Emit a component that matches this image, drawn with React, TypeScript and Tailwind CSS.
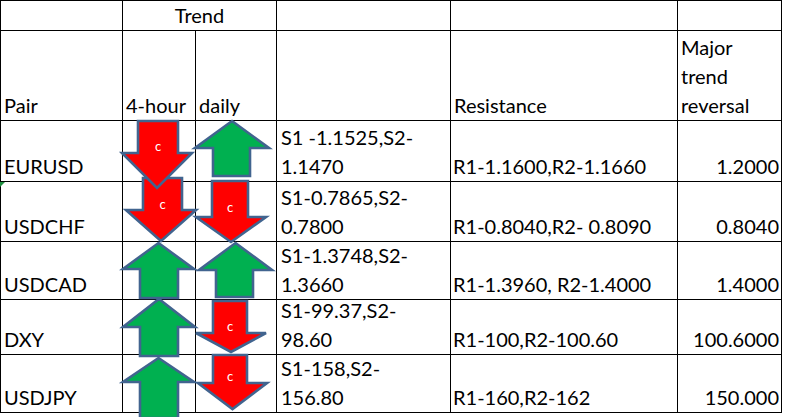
import React from "react";

type Arrow = {
  dir: "up" | "down";
  w: number;
  h: number;
  sl: number; // shaft left
  sr: number; // shaft right
  head: number; // where the head starts
  pos: string; // position classes, written out in full
  cy?: number; // "c" label centre
};

const rows = [
  {
    pair: "EURUSD",
    z: "z-50",
    h4: { dir: "down", w: 72, h: 69, sl: 17, sr: 57, head: 33, pos: "left-[-2px] top-[-1px]", cy: 27 } as Arrow,
    daily: { dir: "up", w: 76, h: 57, sl: 19, sr: 56, head: 28, pos: "left-[-2px] top-[-1px]" } as Arrow,
    s1: "S1 -1.1525,S2-",
    s2: "1.1470",
    res: "R1-1.1600,R2-1.1660",
    major: "1.2000",
  },
  {
    pair: "USDCHF",
    z: "z-40",
    mark: true,
    h4: { dir: "down", w: 72, h: 65, sl: 18, sr: 57, head: 33, pos: "left-[2px] top-[-5px]", cy: 28 } as Arrow,
    daily: { dir: "down", w: 72, h: 63, sl: 17, sr: 53, head: 37, pos: "left-[-1px] top-[-2px]", cy: 28 } as Arrow,
    s1: "S1-0.7865,S2-",
    s2: "0.7800",
    res: "R1-0.8040,R2- 0.8090",
    major: "0.8040",
  },
  {
    pair: "USDCAD",
    z: "z-30",
    h4: { dir: "up", w: 73, h: 57, sl: 18, sr: 56, head: 27, pos: "left-[-1px] top-[0px]" } as Arrow,
    daily: { dir: "up", w: 75, h: 56, sl: 18, sr: 55, head: 28, pos: "left-[2px] top-[0px]" } as Arrow,
    s1: "S1-1.3748,S2-",
    s2: "1.3660",
    res: "R1-1.3960, R2-1.4000",
    major: "1.4000",
  },
  {
    pair: "DXY",
    z: "z-20",
    h4: { dir: "up", w: 74, h: 59, sl: 18, sr: 56, head: 29, pos: "left-[-1px] top-[-2px]" } as Arrow,
    daily: { dir: "down", w: 72, h: 53, sl: 18, sr: 52, head: 33, pos: "left-[-1px] top-[0px]", cy: 27 } as Arrow,
    s1: "S1-99.37,S2-",
    s2: "98.60",
    res: "R1-100,R2-100.60",
    major: "100.6000",
  },
  {
    pair: "USDJPY",
    z: "z-10",
    h4: { dir: "up", w: 73, h: 62, sl: 18, sr: 56, head: 25, pos: "left-[-1px] top-[2px]" } as Arrow,
    daily: { dir: "down", w: 71, h: 56, sl: 16, sr: 50, head: 29, pos: "left-[1px] top-[-1px]", cy: 23 } as Arrow,
    s1: "S1-158,S2-",
    s2: "156.80",
    res: "R1-160,R2-162",
    major: "150.000",
  },
];

function ArrowShape({ a, z }: { a: Arrow; z: string }) {
  const { w, h, sl, sr, head } = a;
  const mid = w / 2;
  const pts =
    a.dir === "down"
      ? [[sl, 1], [sr, 1], [sr, head], [w - 1, head], [mid, h - 1], [1, head], [sl, head]]
      : [[mid, 1], [w - 1, head], [sr, head], [sr, h - 1], [sl, h - 1], [sl, head], [1, head]];
  return (
    <svg width={w} height={h} viewBox={`0 0 ${w} ${h}`} className={`absolute overflow-visible ${z} ${a.pos}`}>
      <polygon
        points={pts.map((p) => p.join(",")).join(" ")}
        fill={a.dir === "down" ? "#ff0000" : "#00b050"}
        stroke="#41648f"
        strokeWidth={2.6}
        strokeLinejoin="miter"
      />
      {a.dir === "down" && (
        <text
          x={(sl + sr) / 2}
          y={(a.cy ?? 27) + 4}
          textAnchor="middle"
          fill="#ffffff"
          fontSize={13}
          fontFamily="Lato, sans-serif"
        >
          c
        </text>
      )}
    </svg>
  );
}

const cell = "border-r border-b border-black flex flex-col justify-end leading-[29px] whitespace-nowrap";

export default function App() {
  return (
    <div className="bg-white min-h-[417px] overflow-hidden font-['Lato',sans-serif] text-[20px] text-black">
      <div className="grid w-fit grid-cols-[122px_73px_81px_174px_227px_104px] grid-rows-[30px_90px_61px_60px_58px_55px_58px] border-l border-t border-black">
        {/* top header row */}
        <div className={cell} />
        <div className={`${cell} col-span-2 items-center`}>Trend</div>
        <div className={cell} />
        <div className={cell} />
        <div className={cell} />

        {/* column names */}
        <div className={`${cell} pl-[3px]`}>Pair</div>
        <div className={`${cell} pl-[3px]`}>4-hour</div>
        <div className={`${cell} pl-[3px]`}>daily</div>
        <div className={cell} />
        <div className={`${cell} pl-[3px]`}>Resistance</div>
        <div className={`${cell} pl-[3px]`}>
          <span>Major</span>
          <span>trend</span>
          <span>reversal</span>
        </div>

        {rows.map((r) => (
          <React.Fragment key={r.pair}>
            <div className={`${cell} relative pl-[3px]`}>
              {r.mark && (
                <svg width="5" height="5" className="absolute left-[-1px] top-0">
                  <polygon points="0,0 5,0 0,5" fill="#1e8e3e" />
                </svg>
              )}
              {r.pair}
            </div>
            <div className={`${cell} relative`}>
              <ArrowShape a={r.h4} z={r.z} />
            </div>
            <div className={`${cell} relative`}>
              <ArrowShape a={r.daily} z={r.z} />
            </div>
            <div className={`${cell} pl-[4px]`}>
              <span>{r.s1}</span>
              <span>{r.s2}</span>
            </div>
            <div className={`${cell} pl-[2px]`}>{r.res}</div>
            <div className={`${cell} items-end pr-[2px]`}>{r.major}</div>
          </React.Fragment>
        ))}
      </div>
    </div>
  );
}
